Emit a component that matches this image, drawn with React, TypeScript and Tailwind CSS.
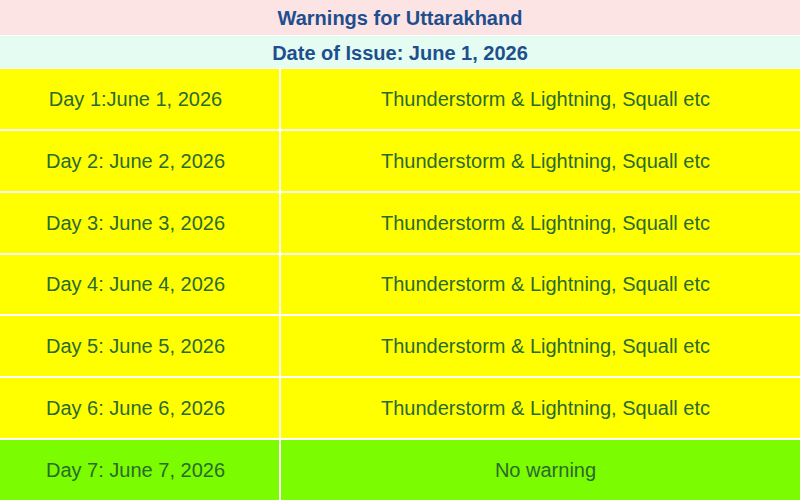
import React from 'react';

const days = [
  { day: 'Day 1:June 1, 2026', warn: 'Thunderstorm & Lightning, Squall etc', green: false },
  { day: 'Day 2: June 2, 2026', warn: 'Thunderstorm & Lightning, Squall etc', green: false },
  { day: 'Day 3: June 3, 2026', warn: 'Thunderstorm & Lightning, Squall etc', green: false },
  { day: 'Day 4: June 4, 2026', warn: 'Thunderstorm & Lightning, Squall etc', green: false },
  { day: 'Day 5: June 5, 2026', warn: 'Thunderstorm & Lightning, Squall etc', green: false },
  { day: 'Day 6: June 6, 2026', warn: 'Thunderstorm & Lightning, Squall etc', green: false },
  { day: 'Day 7: June 7, 2026', warn: 'No warning', green: true },
];

const App: React.FC = () => {
  return (
    <div className="w-[800px] h-[500px] bg-white flex flex-col gap-[1px] overflow-hidden font-['Liberation_Sans',Arial,sans-serif]">
      <div className="h-[35px] shrink-0 bg-[#fde4e4] flex items-center justify-center text-[#1d4f8f] font-bold text-[20px]">
        Warnings for Uttarakhand
      </div>
      <div className="h-[32px] shrink-0 bg-[#e4fcf2] flex items-center justify-center text-[#1d4f8f] font-bold text-[20px] pt-[1px]">
        Date of Issue: June 1, 2026
      </div>
      <div className="flex-1 grid grid-cols-[279px_1fr] grid-rows-7 gap-[2px]">
        {days.map((d) => (
          <React.Fragment key={d.day}>
            <div className={`flex items-center justify-center pr-[8px] text-[20px] text-[#2a6a2e] ${d.green ? 'bg-[#7cfc00]' : 'bg-[#ffff00]'}`}>
              {d.day}
            </div>
            <div className={`flex items-center justify-center pl-[10px] text-[20px] text-[#2a6a2e] ${d.green ? 'bg-[#7cfc00]' : 'bg-[#ffff00]'}`}>
              {d.warn}
            </div>
          </React.Fragment>
        ))}
      </div>
    </div>
  );
};

export default App;
